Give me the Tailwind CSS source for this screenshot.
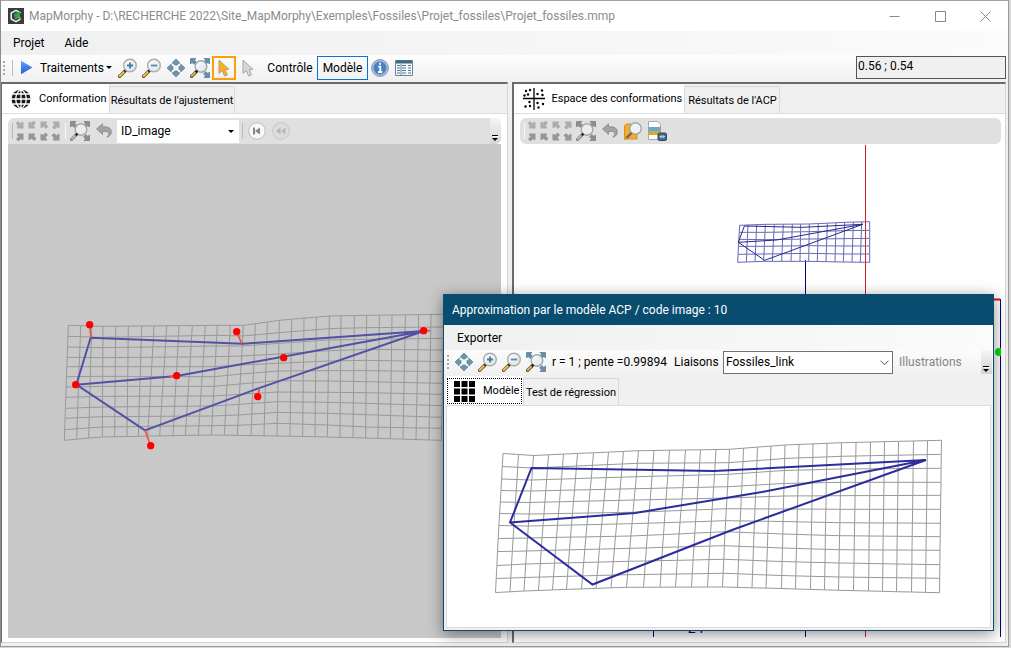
<!DOCTYPE html>
<html lang="fr">
<head>
<meta charset="utf-8">
<title>MapMorphy</title>
<script src="https://cdn.jsdelivr.net/npm/@tailwindcss/browser@4"></script>
</head>
<body class="h-screen overflow-hidden bg-[#d8d8d8] pr-[2px] pb-[1px] font-[Roboto,sans-serif] text-[12px] leading-4 text-black">

<svg class="absolute size-0">
  <defs>
    <linearGradient id="glass" x1="0" y1="0" x2="1" y2="1"><stop offset="0" stop-color="#fff"/><stop offset="1" stop-color="#d3e2ea"/></linearGradient>
    <linearGradient id="blue" x1="0" y1="0" x2="0" y2="1"><stop offset="0" stop-color="#62a0f4"/><stop offset="1" stop-color="#1c62d8"/></linearGradient>
    <symbol id="lens" viewBox="0 0 20 20">
      <path d="M1.500 18.500 7 13" stroke="#6b5a30" stroke-width="3.200" stroke-linecap="round"/>
      <path d="M1.800 18 6 13.800" stroke="#e9c34d" stroke-width="1.800" stroke-linecap="round"/>
      <path d="M6.400 13.600 8.200 11.800" stroke="#222" stroke-width="2.400"/>
      <circle cx="12" cy="7.500" r="6.300" fill="url(#glass)" stroke="#a9abac" stroke-width="1.400"/>
    </symbol>
    <symbol id="zoomin" viewBox="0 0 20 20"><use href="#lens"/><path d="M12 4.500v6M9 7.500h6" stroke="#4a7a98" stroke-width="1.800"/></symbol>
    <symbol id="zoomout" viewBox="0 0 20 20"><use href="#lens"/><path d="M8.800 7.500h6.400" stroke="#6485a0" stroke-width="1.800"/></symbol>
    <symbol id="pan" viewBox="0 0 20 20">
      <g fill="#6c96b0" stroke="#4d7891" stroke-width=".6" stroke-linejoin="round">
        <path id="pa" d="M10 1 13.600 4.600V5.400H11.600V7H8.400V5.400H6.400V4.600Z"/>
        <use href="#pa" transform="rotate(90 10 10)"/><use href="#pa" transform="rotate(180 10 10)"/><use href="#pa" transform="rotate(270 10 10)"/>
      </g>
    </symbol>
    <symbol id="fitarrows" viewBox="0 0 20 20">
      <path id="fa" d="M.5.5H6L4.400 2.100 6.400 4.100 4.100 6.400 2.100 4.400.5 6Z" stroke-width=".6"/>
      <use href="#fa" transform="rotate(90 10 10)"/><use href="#fa" transform="rotate(180 10 10)"/>
    </symbol>
    <symbol id="fit" viewBox="0 0 20 20">
      <use href="#fitarrows" fill="#6490ac" stroke="#3f6880"/>
      <circle cx="11" cy="8.500" r="5.800" fill="url(#glass)" stroke="#a4a6a8" stroke-width="1.400"/>
      <path d="M1.500 18.500 6 14" stroke="#6b5a30" stroke-width="3.200" stroke-linecap="round"/><path d="M1.800 18 5.400 14.400" stroke="#e9c34d" stroke-width="1.600" stroke-linecap="round"/><path d="M5.600 14.400 7.400 12.600" stroke="#222" stroke-width="2.200"/>
    </symbol>
    <symbol id="fitgray" viewBox="0 0 20 20">
      <use href="#fitarrows" fill="#8f8f8f" stroke="#6c6c6c"/>
      <circle cx="11" cy="8.500" r="5.800" fill="#ededed" stroke="#a8a8a8" stroke-width="1.400"/>
      <path d="M1.500 18.500 6 14" stroke="#777" stroke-width="3" stroke-linecap="round"/><path d="M1.800 18 5.400 14.400" stroke="#c8c8c8" stroke-width="1.400" stroke-linecap="round"/><path d="M5.600 14.400 7.400 12.600" stroke="#222" stroke-width="2.200"/>
    </symbol>
    <symbol id="undo" viewBox="0 0 16 16"><path d="M.5 6 6.500.8V3.800H9c4 0 6.300 2 6.300 5.200 0 3-2 4.600-4.600 5.200 1.400-1 2-2.200 2-3.300 0-1.800-1.300-2.500-3.700-2.500H6.500v3Z" fill="#a3a3a3" stroke="#868686" stroke-width=".8"/></symbol>
    <symbol id="cursor" viewBox="0 0 12 18"><path d="M1 1V14.500L4.200 11.600 6.600 17 9.400 15.800 7.200 10.400H11Z" stroke-width="1"/></symbol>
    <symbol id="corners" viewBox="0 0 46 20">
      <defs><path id="ca" d="M0-.5H6.500V6H5L4 5 1.500 7.500-1 5 1.500 2.500 0 1Z"/></defs>
      <g fill="#adadad">
        <use href="#ca" transform="translate(1 1) rotate(90 3 3)"/><use href="#ca" transform="translate(13 1) rotate(180 3 3)"/><use href="#ca" transform="translate(25 1) rotate(270 3 3)"/><use href="#ca" transform="translate(37 1)"/>
      </g>
      <g fill="#969696">
        <use href="#ca" transform="translate(1 13)"/><use href="#ca" transform="translate(13 13) rotate(270 3 3)"/><use href="#ca" transform="translate(25 13) rotate(180 3 3)"/><use href="#ca" transform="translate(37 13) rotate(90 3 3)"/>
      </g>
    </symbol>
    <symbol id="more" viewBox="0 0 10 24"><path d="M3 17.500h6" stroke="#fff"/><path d="M2 16.500h6" stroke="#000"/><path d="M2 19h6l-3 3Z"/></symbol>
  </defs>
</svg>

<div class="relative flex h-full flex-col border border-t-[#a5a5a5] border-r-[#9a9a9a] border-b-[#9a9a9a] border-l-[#8c8c8c] bg-[#f0f0f0]">

  <header class="flex h-[30px] shrink-0 items-center bg-white pl-[7px] text-[#8c8c8c]">
    <svg class="size-4" viewBox="0 0 16 16"><rect width="16" height="16" fill="#3b3b3b"/><path d="M12.500 5 8 2.400 3.200 5v6L8 13.600 12.500 11" fill="none" stroke="#e8e8e8" stroke-width="1.600"/><path d="M6 6 12 3.600V8.800L6.500 9.500Z" fill="#27a844"/><path d="M7 10.500 12 9v2" fill="none" stroke="#5bd070"/></svg>
    <h1 class="ml-[5px] truncate">MapMorphy - D:\RECHERCHE 2022\Site_MapMorphy\Exemples\Fossiles\Projet_fossiles\Projet_fossiles.mmp</h1>
    <div class="ml-auto flex pr-px">
      <button class="flex h-7 w-[46px] items-center justify-center" aria-label="Réduire"><svg class="size-[11px]" viewBox="0 0 11 11"><path d="M.5 5.500h10" stroke="#888"/></svg></button>
      <button class="flex h-7 w-[46px] items-center justify-center" aria-label="Agrandir"><svg class="size-[11px]" viewBox="0 0 11 11"><path d="M.5.5h10v10H.5Z" fill="none" stroke="#888"/></svg></button>
      <button class="flex h-7 w-[44px] items-center justify-center" aria-label="Fermer"><svg class="size-[11px]" viewBox="0 0 11 11"><path d="m.5.5 10 10m0-10-10 10" stroke="#888"/></svg></button>
    </div>
  </header>

  <nav class="flex h-6 shrink-0 items-center gap-5 bg-linear-to-r from-[#f0f0f0] to-[#fbfbfb] pl-3">
    <button>Projet</button><button>Aide</button>
  </nav>

  <div class="flex h-[27px] shrink-0 items-center bg-linear-to-b from-[#fdfdfd] to-[#f0f0f0] pr-[2px] pb-[2px]">
    <svg class="h-4 w-3 shrink-0" viewBox="0 0 12 16"><path d="M3 1v15" stroke="#a9a9a9" stroke-width="2" stroke-dasharray="2 2"/><path d="M11.500 0v16" stroke="#bdbdbd"/></svg>
    <button class="ml-[7px] flex w-[96px] items-center">
      <svg class="h-[15px] w-[13px] shrink-0" viewBox="0 0 13 15"><path d="M1 .7 12.500 7.500 1 14.300Z" fill="url(#blue)"/></svg>
      <span class="ml-[7px]">Traitements</span>
      <svg class="ml-auto mr-1 h-[3px] w-[6px] shrink-0" viewBox="0 0 6 3"><path d="M0 0h6L3 3Z"/></svg>
    </button>
    <button class="flex w-6 justify-center" aria-label="Zoom avant"><svg class="size-5"><use href="#zoomin"/></svg></button>
    <button class="flex w-6 justify-center" aria-label="Zoom arrière"><svg class="size-5"><use href="#zoomout"/></svg></button>
    <button class="flex w-6 justify-center" aria-label="Déplacer"><svg class="size-5"><use href="#pan"/></svg></button>
    <button class="flex w-6 justify-center" aria-label="Ajuster"><svg class="size-5"><use href="#fit"/></svg></button>
    <button class="flex size-6 items-center justify-center border-2 border-[#f9a10c]" aria-label="Sélection"><svg class="h-[18px] w-3" fill="#fbb01b" stroke="#b5a080"><use href="#cursor"/></svg></button>
    <button class="flex w-6 justify-center" aria-label="Pointeur"><svg class="h-[18px] w-3" fill="#d8d8d8" stroke="#a5a5a5"><use href="#cursor"/></svg></button>
    <button class="ml-1 w-[52px] text-center">Contrôle</button>
    <button class="ml-px h-6 w-[51px] border border-[#0b74cc] text-center">Modèle</button>
    <button class="flex w-6 justify-center" aria-label="Informations"><svg class="size-[18px]" viewBox="0 0 18 18"><circle cx="9" cy="9" r="8.400" fill="#a5bddb" stroke="#8199b8"/><circle cx="9" cy="9" r="6.400" fill="#4a80bf"/><path d="M9 3.800v2M7.300 7.600H9.300v5M7 13h4.300" stroke="#fff" stroke-width="1.800" fill="none"/></svg></button>
    <button class="flex w-6 justify-center" aria-label="Tableau"><svg class="h-4 w-[18px]" viewBox="0 0 18 16"><path d="M.5.5h17v15H.5Z" fill="#f3f7f9" stroke="#6a8599"/><path d="M1 2h16" stroke="#3d6783" stroke-width="3"/><path d="M2 5.500h3m2 0h4m2 0h3M2 8h3m2 0h4m2 0h3M2 10.500h3m2 0h4m2 0h3M2 13h3m2 0h4m2 0h3" stroke="#517993" stroke-width="1.200"/><path d="M6 4v11" stroke="#6a8599"/></svg></button>
    <input aria-label="Coordonnées" readonly value="0.56 ; 0.54" class="ml-auto h-[23px] w-[150px] border border-[#555] bg-[#f0f0f0] pb-[3px] pl-px outline-none">
  </div>

  <main class="flex min-h-0 flex-1 gap-1 pb-[3px] pr-[2px]">

    <section class="flex min-w-0 flex-[508] flex-col border border-t-2 border-[#d5d5d5] border-t-[#6b6b6b] border-l-[#6b6b6b]">
      <div class="flex h-[29px] shrink-0 items-end font-[Roboto,sans-serif] text-[11px]" role="tablist">
        <button role="tab" class="flex h-full w-[107px] items-center bg-white pl-[9px]">
          <svg class="mr-2 size-5" viewBox="0 0 20 20"><circle cx="10" cy="10" r="9.500" fill="#181818"/><path d="M10 0v20M0 10h20M1.500 5h17M1.500 15h17M10 0C3 5 3 15 10 20M10 0c7 5 7 15 0 20" fill="none" stroke="#fff" stroke-width="1.300"/></svg>Conformation
        </button>
        <button role="tab" class="h-[27px] w-[126px] whitespace-nowrap border border-b-0 border-[#d9d9d9] pt-[2px] text-center">Résultats de l'ajustement</button>
      </div>
      <div class="flex min-h-0 flex-1 flex-col border-t border-[#dcdcdc] bg-white px-[6px] pt-1 pb-[4px]">
        <div class="flex h-[26px] shrink-0 items-center rounded-md rounded-bl-none bg-[#e0e0e0] pl-1">
          <svg class="mr-[3px] h-4 w-px"><path d="M.5 0v16" stroke="#b8b8b8"/></svg>
          <button aria-label="Orientation"><svg class="h-5 w-[46px]"><use href="#corners"/></svg></button>
          <svg class="ml-[3px] mr-1 h-4 w-px"><path d="M.5 0v16" stroke="#f8f8f8"/></svg>
          <button aria-label="Ajuster"><svg class="size-5"><use href="#fitgray"/></svg></button>
          <button class="ml-[6px]" aria-label="Annuler"><svg class="size-4"><use href="#undo"/></svg></button>
          <div class="relative ml-[5px] h-[23px] w-[122px]">
            <select aria-label="Image" class="h-full w-full appearance-none bg-white pl-1"><option>ID_image</option></select>
            <svg class="pointer-events-none absolute top-[10px] right-[5px] h-[3px] w-[6px]" viewBox="0 0 6 3"><path d="M0 0h6L3 3Z"/></svg>
          </div>
          <svg class="ml-[3px] h-4 w-px"><path d="M.5 0v16" stroke="#bbb"/></svg>
          <button class="ml-[5px]" aria-label="Première image"><svg class="size-[18px]" viewBox="0 0 18 18"><circle cx="9" cy="9" r="8.300" fill="#f8f8f8" stroke="#bcbcbc"/><path d="M5 5.500h2v7H5ZM7 9l5-3.500v7Z" fill="#888"/></svg></button>
          <button class="ml-[6px]" aria-label="Image précédente"><svg class="size-[18px]" viewBox="0 0 18 18"><circle cx="9" cy="9" r="8.300" fill="#dcdcdc" stroke="#c6c6c6"/><path d="m4 9 4.500-3.500v7ZM9 9l4.500-3.500v7Z" fill="#b8b8b8"/></svg></button>
          <button class="ml-auto h-full w-[11px] rounded-r-md bg-linear-to-b from-[#f6f6f6] to-[#d2d2d2]" aria-label="Options"><svg class="h-6 w-[10px]"><use href="#more"/></svg></button>
        </div>
        <svg class="min-h-0 w-full flex-1 bg-[#c8c8c8]">
          <g transform="translate(42 156) scale(.33333)" fill="none">
            <path id="mesh-fossil" stroke="#999" stroke-width="3"/>
            <g stroke="#5252a4" stroke-width="6">
              <path d="M1122 93 580 131 122 113 79 254 285 391 625 265 1122 93 380 228 79 254"/>
            </g>
            <path d="M119 74 123 113M560 95 575 130M357 232 380 227M628 265 623 290M285 391 302 437M1121 92h20M77 254h8" stroke="#ee4f4f" stroke-width="5"/>
            <g fill="#f00"><circle cx="119" cy="74" r="11"/><circle cx="560" cy="95" r="11"/><circle cx="77" cy="254" r="11"/><circle cx="380" cy="227" r="11"/><circle cx="701" cy="173" r="11"/><circle cx="623" cy="290" r="11"/><circle cx="302" cy="437" r="11"/><circle cx="1121" cy="92" r="11"/></g>
          </g>
        </svg>
      </div>
    </section>

    <section class="flex min-w-0 flex-[493] flex-col border border-t-2 border-l-2 border-[#d5d5d5] border-t-[#6b6b6b] border-l-[#6b6b6b]">
      <div class="flex h-[29px] shrink-0 items-end font-[Roboto,sans-serif] text-[11px]" role="tablist">
        <button role="tab" class="flex h-full w-[170px] items-center whitespace-nowrap bg-white pl-[9px]">
          <svg class="mr-[6px] size-[22px]" viewBox="0 0 22 22"><path d="M11 0v22M0 10.500h22" stroke="#000" stroke-width="1.300"/><g><circle cx="3" cy="3" r="1.200"/><circle cx="7" cy="2" r="1.200"/><circle cx="5" cy="6.500" r="1.200"/><circle cx="1.500" cy="7.500" r="1.200"/><circle cx="14.500" cy="6" r="1.200"/><circle cx="19" cy="2.500" r="1.200"/><circle cx="19.500" cy="7" r="1.200"/><circle cx="6.500" cy="14" r="1.200"/><circle cx="2.500" cy="18.500" r="1.200"/><circle cx="7" cy="18" r="1.200"/><circle cx="14.500" cy="15" r="1.200"/><circle cx="15.500" cy="19.500" r="1.200"/><circle cx="20" cy="16" r="1.200"/></g></svg>Espace des conformations
        </button>
        <button role="tab" class="h-[27px] w-[96px] whitespace-nowrap border border-b-0 border-[#d9d9d9] pt-[2px] text-center">Résultats de l'ACP</button>
      </div>
      <div class="flex min-h-0 flex-1 flex-col border-t border-[#dcdcdc] bg-white pl-[6px] pr-1 pt-1 pb-[4px]">
        <div class="flex h-[26px] shrink-0 items-center rounded-md bg-[#e0e0e0] pl-1">
          <svg class="mr-[3px] h-4 w-px"><path d="M.5 0v16" stroke="#f8f8f8"/></svg>
          <button aria-label="Orientation"><svg class="h-5 w-[46px]"><use href="#corners"/></svg></button>
          <button class="ml-[2px]" aria-label="Ajuster"><svg class="size-5"><use href="#fitgray"/></svg></button>
          <button class="ml-[6px]" aria-label="Annuler"><svg class="size-4"><use href="#undo"/></svg></button>
          <button class="ml-[5px]" aria-label="Explorer"><svg class="size-5" viewBox="0 0 20 20"><path d="M1.500 4.500 4 3H8l1 1h5v14H4l-2.500.5Z" fill="#f7ab2b" stroke="#d09128"/><circle cx="12.500" cy="7.500" r="5.800" fill="#edf3f5" stroke="#a3a3a3" stroke-width="1.400"/><path d="M3.500 17 8.500 12" stroke="#666" stroke-width="2.400"/></svg></button>
          <button class="ml-1" aria-label="Exporter l'image"><svg class="size-5" viewBox="0 0 20 20"><path d="M1.500.5h9l3 3v15h-12Z" fill="#fff" stroke="#aaa"/><path d="M1.500 6h12v8h-12Z" fill="#6aa5d5"/><path d="M1.500 14V10.500C4 9 7 11 13.500 9.500V14Z" fill="#cfae37"/><rect x="11" y="12" width="8.500" height="7.500" rx="1.500" fill="#426a86" stroke="#2a4a60"/><path d="M13 15.700h4.500M14.500 14.200 13 15.700l1.500 1.500M16 14.200l1.500 1.500-1.500 1.500" fill="none" stroke="#dce8ef" stroke-width=".9"/></svg></button>
        </div>
        <svg class="min-h-0 w-full flex-1 bg-white">
          <path d="M345.500 1v492" stroke="#cc1f1f"/>
          <path d="M285.500 116v377M133.500 480v13M480.500 155v338" stroke="#000082"/>
          <path d="M474 155.500h6" stroke="#f00" stroke-width="2"/>
          <circle cx="479" cy="208" r="4" fill="#00e000"/>
          <text x="164" y="489" fill="#000082" font-family="Roboto" font-size="14">-24</text>
          <g transform="translate(200 66) scale(.33333)" fill="none">
            <path id="mesh-small" stroke="#6666b8" stroke-width="3"/>
            <path d="M428 43 245 52 73 48 55 97 134 151 428 43 170 90 55 97" stroke="#26268f" stroke-width="3"/>
          </g>
        </svg>
      </div>
    </section>
  </main>

  <div role="dialog" aria-labelledby="dlg" class="absolute top-[293px] left-[442px] flex h-[337px] w-[551px] flex-col border-[1px] border-[#084d6f] bg-[#f0f0f0] shadow-[0_3px_14px_rgba(0,0,0,0.45)]">
    <h2 id="dlg" class="flex h-[30px] shrink-0 items-center bg-[#084d6f] pl-2 text-white">Approximation par le modèle ACP / code image : 10</h2>
    <div class="flex h-[25px] shrink-0 items-center bg-linear-to-r from-[#f0f0f0] to-[#fbfbfb] pl-[13px]"><button>Exporter</button></div>
    <div class="flex h-[26px] shrink-0 items-center whitespace-nowrap bg-linear-to-b from-[#fcfcfc] to-[#f0f0f0] pb-[2px]">
      <svg class="h-4 w-2 shrink-0" viewBox="0 0 8 16"><path d="M4 1v15" stroke="#a9a9a9" stroke-width="2" stroke-dasharray="2 2"/></svg>
      <button class="flex w-6 shrink-0 justify-center" aria-label="Déplacer"><svg class="size-5"><use href="#pan"/></svg></button>
      <button class="flex w-6 shrink-0 justify-center" aria-label="Zoom avant"><svg class="size-5"><use href="#zoomin"/></svg></button>
      <button class="flex w-6 shrink-0 justify-center" aria-label="Zoom arrière"><svg class="size-5"><use href="#zoomout"/></svg></button>
      <button class="flex w-6 shrink-0 justify-center" aria-label="Ajuster"><svg class="size-5"><use href="#fit"/></svg></button>
      <output class="ml-1 w-[122px]">r = 1 ; pente =0.99894</output>
      <label for="link" class="w-[49px]">Liaisons</label>
      <div class="relative h-[23px] w-[170px] shrink-0">
        <select id="link" class="h-full w-full appearance-none border border-[#707070] bg-white pl-[2px]"><option>Fossiles_link</option></select>
        <svg class="pointer-events-none absolute top-[9px] right-1 h-[6px] w-[9px]" viewBox="0 0 9 6"><path d="m.5.7 4 4 4-4" fill="none" stroke="#555"/></svg>
      </div>
      <button class="ml-[6px] text-[#858585]" disabled>Illustrations</button>
      <button class="ml-auto mr-px h-full w-[11px] bg-linear-to-b from-[#f6f6f6] to-[#d2d2d2]" aria-label="Options"><svg class="h-6 w-[10px]"><use href="#more"/></svg></button>
    </div>
    <div class="flex h-[29px] shrink-0 items-end pl-[2px] font-[Roboto,sans-serif] text-[11px]" role="tablist">
      <div class="h-full bg-white px-px pt-[2px]">
      <button role="tab" class="flex h-[26px] w-[75px] items-center border border-dotted border-black pl-[6px]">
        <svg class="mr-2 size-[21px] shrink-0" viewBox="0 0 21 21"><path d="M0 0h6v6H0ZM7.500 0h6v6h-6ZM15 0h6v6h-6ZM0 7.500h6v6H0ZM7.500 7.500h6v6h-6ZM15 7.500h6v6h-6ZM0 15h6v6H0ZM7.500 15h6v6h-6ZM15 15h6v6h-6Z"/></svg>Modèle
      </button></div>
      <button role="tab" class="h-[27px] w-[96px] whitespace-nowrap border border-b-0 border-[#d9d9d9] pt-[2px] text-center">Test de régression</button>
    </div>
    <div class="mr-[2px] mb-[2px] ml-[2px] flex min-h-0 flex-1 border border-[#dcdcdc] bg-white">
      <svg class="w-full">
        <g transform="translate(-447 -406)" fill="none">
          <path id="mesh-model" stroke="#999"/>
          <path d="M926 460 714 471 531.500 468 510 522.500 592.500 584.500 732 530 926 460 762 492 635 513 510 522.500" stroke="#2c2c9c" stroke-width="2"/>
        </g>
      </svg>
    </div>
  </div>
</div>

<script>
  // Draws a deformed grid. top/bottom: x of every column on the first and last row.
  // profiles: [column, y of every row] at a few columns; the rest is interpolated.
  function mesh(id, top, bottom, profiles) {
    const rows = profiles[0][1].length, cols = top.length;
    const x = (c, r) => top[c] + (bottom[c] - top[c]) * r / (rows - 1);
    const y = (c, r) => {
      let i = 1;
      while (profiles[i][0] < c) i++;
      const a = profiles[i - 1], b = profiles[i];
      return a[1][r] + (b[1][r] - a[1][r]) * (c - a[0]) / (b[0] - a[0]);
    };
    const pt = (c, r) => x(c, r).toFixed(1) + ' ' + y(c, r).toFixed(1);
    let d = '';
    for (let r = 0; r < rows; r++) { d += 'M' + pt(0, r); for (let c = 1; c < cols; c++) d += 'L' + pt(c, r); }
    for (let c = 0; c < cols; c++) { d += 'M' + pt(c, 0); for (let r = 1; r < rows; r++) d += 'L' + pt(c, r); }
    document.getElementById(id).setAttribute('d', d);
  }
  mesh('mesh-fossil',
    [55,92,125,159,197,235,275,312,350,387,427,466,502,541,580,616,652,688,725,762,799,838,873,913,950,988,1026,1066,1106,1143,1182],
    [43,80,116,157,194,231,265,293,329,369,406,445,484,523,562,603,642,681,720,758,795,832,870,909,947,984,1021,1059,1098,1137,1174],
    [[0,[76,109,141,172,200,230,261,292,325,355,389,421]],
     [3,[79,112,143,173,200,229,259,289,321,350,381,411]],
     [12,[76,106,138,170,200,230,259,288,318,348,377,405]],
     [14,[76,108,138,168,195,222,252,283,313,345,376,406]],
     [17,[61,98,130,162,190,213,242,276,305,337,370,408]],
     [21,[48,86,120,152,183,212,243,277,307,340,375,411]],
     [24,[46,83,118,148,181,212,245,278,310,344,381,414]],
     [30,[43,81,115,150,185,215,250,283,317,352,385,421]]]);
  mesh('mesh-small',
    [59,84,110,136,163,190,217,242,268,295,322,348,374,400,425,449],
    [53,79,105,131,157,185,213,240,266,292,318,345,370,396,421,449],
    [[0,[46,67,88,109,133,157]],[3,[43,67,89,109,132,154]],[8,[42,65,87,107,130,154]],[12,[37,62,86,108,132,156]],[15,[35,61,85,108,132,157]]]);
  mesh('mesh-model',
    [503,518.5,533.5,548.5,563.5,577.5,593.5,608.5,623.5,638.5,654,669.5,685.5,700.5,716,729.5,743.5,757.5,771,785,799,813,827,841.5,856,870.5,884.5,898.5,913.5,927.5,941.5],
    [495.5,510,524,538.5,552.5,566.5,581.5,596,611,626.5,643.5,660,675.5,691.5,707.5,722.5,737.5,752,766,781.5,795.5,810.5,824.5,838.5,853.5,868.5,882.5,896.5,911.5,925.5,939.5],
    [[0,[453.5,466.5,479,490.5,502,513.5,525.5,538.5,551.5,565.5,578.5,592.5]],
     [2,[455.5,468,480,491,502.5,514,526,538,551,564,577.5,591]],
     [9,[450.7,463.3,476.7,488.7,500,512.3,523.7,536,548.3,561.3,574.7,587.3]],
     [15,[449.3,462.7,474.3,486.7,498,508.7,520.7,531.7,545.7,559.3,573.3,587]],
     [19,[445,458.5,470.5,483.5,496,509,521.5,534,548,561.5,575.5,588.5]],
     [23,[442.7,456.3,469,482.3,495.7,509.3,522.7,535.7,549.7,563,577,590.3]],
     [30,[440.3,454.3,468.3,482.3,495.3,509.3,523.3,536.7,550.3,564.7,578.3,592.7]]]);
</script>
</body>
</html>
